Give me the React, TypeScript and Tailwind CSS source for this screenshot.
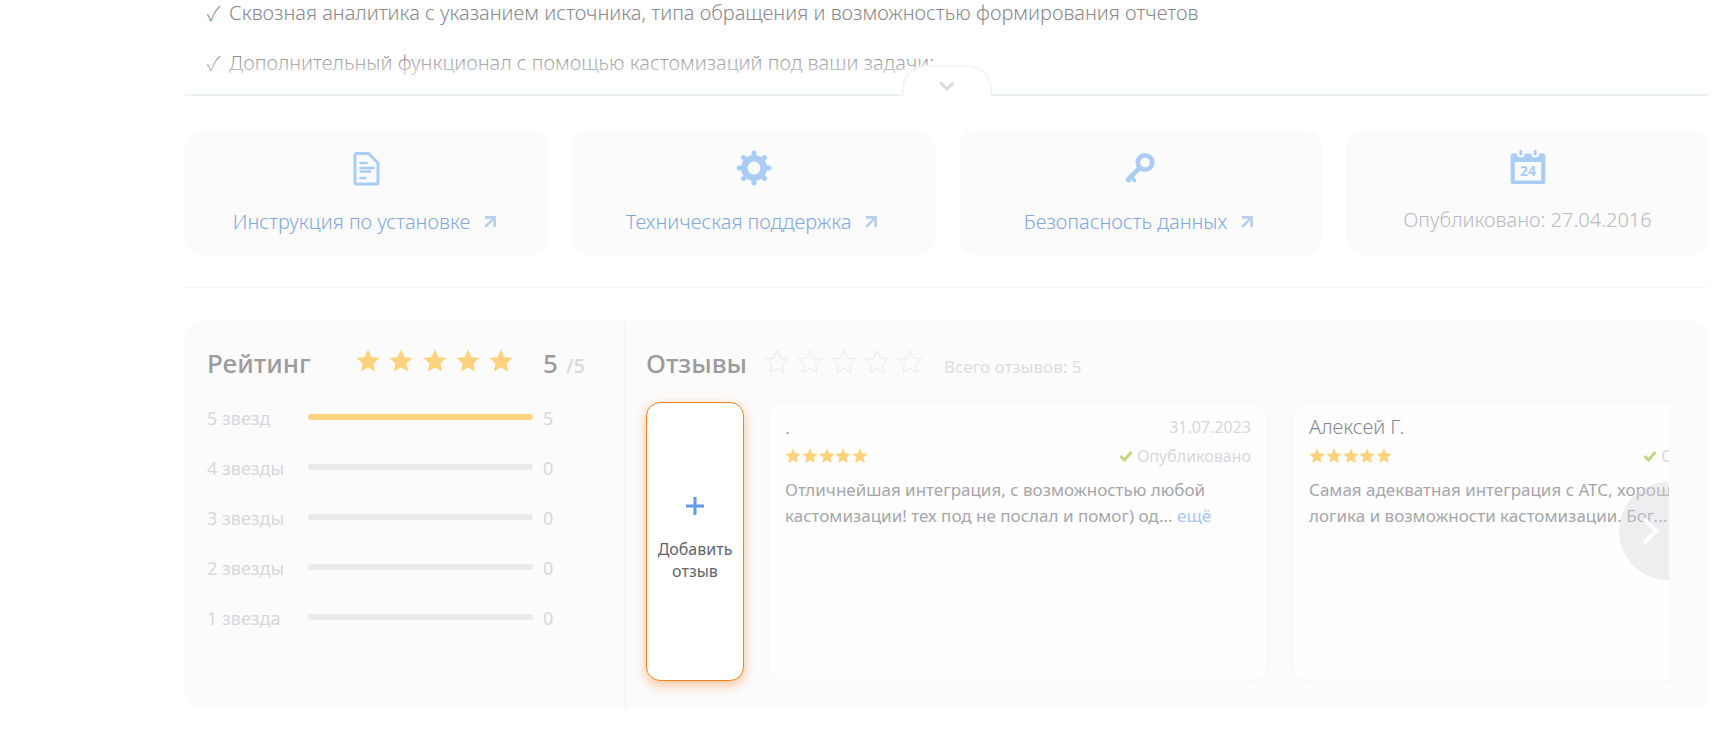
import type { ReactNode } from 'react';
import clsx from 'clsx';

const features = [
  'Сквозная аналитика с указанием источника, типа обращения и возможностью формирования отчетов',
  'Дополнительный функционал с помощью кастомизаций под ваши задачи:',
];

const ratings = [
  { label: '5 звезд', count: 5 },
  { label: '4 звезды', count: 0 },
  { label: '3 звезды', count: 0 },
  { label: '2 звезды', count: 0 },
  { label: '1 звезда', count: 0 },
];

const reviews = [
  {
    name: '.',
    date: '31.07.2023',
    text: 'Отличнейшая интеграция, с возможностью любой кастомизации! тех под не послал и помог) од...',
    more: true,
  },
  {
    name: 'Алексей Г.',
    date: '',
    text: 'Самая адекватная интеграция с АТС, хорошая логика и возможности кастомизации. Бог...',
    more: false,
  },
];

const STAR = 'M12 .5l3.400 7.500 8.100.9-6 5.500 1.700 8.100-7.200-4.100-7.200 4.100 1.700-8.100-6-5.500 8.100-.9z';

function Stars({ className, size, outline }: { className?: string; size: string; outline?: boolean }) {
  return (
    <div className={clsx('flex justify-between', className)}>
      {[1, 2, 3, 4, 5].map((n) => (
        <svg
          key={n}
          viewBox="0 0 24 24"
          className={clsx(size, outline ? 'fill-none stroke-[#e9eaec]' : 'fill-[#ffd280]')}
          strokeLinejoin="round"
        >
          <path d={STAR} />
        </svg>
      ))}
    </div>
  );
}

function DocIcon() {
  return (
    <svg viewBox="0 0 36 36" className="size-9 fill-none stroke-[#a9cdf4]" strokeLinecap="round" strokeLinejoin="round">
      <path d="M7.500 3.500h12l9.500 9.500v19.500a1.500 1.500 0 0 1-1.500 1.500H7.500A1.500 1.500 0 0 1 6 32.500V5a1.500 1.500 0 0 1 1.500-1.500z" strokeWidth="3" />
      <path d="M11.500 13h6M11.500 18h13M11.500 21.500h9.500M11.500 28h5" strokeWidth="2.600" />
    </svg>
  );
}

function GearIcon() {
  return (
    <svg viewBox="-18 -18 36 36" className="size-9 fill-none stroke-[#a9cdf4]">
      <circle r="9.700" strokeWidth="6.600" />
      <path
        d="M0-11.500V-15M0 11.500V15M-11.500 0H-15M11.500 0H15M8.200-8.200l2.200-2.200M-8.200-8.200l-2.200-2.200M8.200 8.200l2.200 2.200M-8.200 8.200l-2.200 2.200"
        strokeWidth="5"
        strokeLinecap="round"
      />
    </svg>
  );
}

function KeyIcon() {
  return (
    <svg viewBox="0 0 36 36" className="size-9 fill-none stroke-[#a9cdf4]" strokeLinecap="round">
      <circle cx="22" cy="12.500" r="7.200" strokeWidth="4.800" />
      <path d="M16 18.500L5 29.500" strokeWidth="4.600" />
      <path d="M8.500 27.500l3 3M5 29.500l1.200 1.200" strokeWidth="3.600" />
    </svg>
  );
}

function CalendarIcon() {
  return (
    <svg viewBox="0 0 36 36" className="size-9">
      <path
        d="M2.500 3.500h4.400a3.900 3.900 0 0 0 7.800 0h6.600a3.900 3.900 0 0 0 7.800 0h4.400a1.800 1.800 0 0 1 1.800 1.800v27a1.800 1.800 0 0 1-1.800 1.800h-31a1.800 1.800 0 0 1-1.800-1.800v-27a1.800 1.800 0 0 1 1.800-1.800zM4.800 12v18.500h26.400V12z"
        fillRule="evenodd"
        fill="#a9cdf4"
      />
      <path d="M10.800 1.500v2.500M25.200 1.500v2.500" stroke="#a9cdf4" strokeWidth="3" strokeLinecap="round" />
      <text x="18" y="26" textAnchor="middle" className="fill-[#a9cdf4] text-[14px] font-bold">
        24
      </text>
    </svg>
  );
}

function InfoCard({ icon, children }: { icon: ReactNode; children: ReactNode }) {
  return (
    <div className="flex h-[125px] flex-col items-center rounded-[16px] bg-[#fbfbfb] pt-5 text-[20px] leading-7 font-light">
      {icon}
      {children}
    </div>
  );
}

function InfoLink({ children }: { children: ReactNode }) {
  return (
    <a href="#" className="mt-[22px] flex items-center gap-[14px] pr-1 text-[#82a8db]">
      {children}
      <svg viewBox="0 0 12 12" className="size-3 fill-none stroke-[#b5cfee]" strokeWidth="2.600">
        <path d="M1 1.400h9.600V11M10.200 1.800L1.200 10.800" />
      </svg>
    </a>
  );
}

function ReviewCard({ name, date, text, more }: { name: string; date: string; text: string; more: boolean }) {
  return (
    <article className="w-[500px] shrink-0 rounded-[16px] border border-[#f7f7f7] bg-[#fefefe] px-4 pt-[10px]">
      <div className="flex items-center justify-between">
        <h3 className="text-[20px] leading-7 font-light text-[#88888c]">{name}</h3>
        {date && <time className="text-[16px] leading-7 text-[#d6d8dc]">{date}</time>}
      </div>
      <div className="mt-px flex items-center justify-between">
        <Stars size="size-4" className="w-[83px]" />
        <span className="flex items-center gap-1 text-[16px] leading-7 text-[#d6d8dc]">
          <svg viewBox="0 0 14 12" className="h-3 w-[14px] fill-none stroke-[#bfd97f]" strokeWidth="3">
            <path d="M1.500 6l4 4 7-8" />
          </svg>
          Опубликовано
        </span>
      </div>
      <p className="mt-[7px] pr-8 text-[17px] leading-[26px] text-[#a6a6a9]">
        {text}{' '}
        {more && (
          <a href="#" className="text-[#a9c8f2]">
            ещё
          </a>
        )}
      </p>
    </article>
  );
}

export default function App() {
  return (
    <main className="pr-[21px] pb-6 pl-[185px] font-['Noto_Sans',sans-serif]">
      <section className="relative border-b-2 border-[#eaf1f7] pb-[18px]">
        <ul className="flex flex-col gap-6 pl-[22px] text-[20px] leading-[26px] font-light text-[#88888c]">
          {features.map((feature) => (
            <li key={feature} className="flex gap-2">
              <span className="w-[14px] font-['Noto_Sans_CJK_SC',sans-serif]">✓</span>
              {feature}
            </li>
          ))}
        </ul>
        <div className="absolute inset-x-0 bottom-0 h-10 bg-linear-to-t from-white from-10% to-white/0" />
        <button
          aria-label="Развернуть описание"
          className="absolute -bottom-[2px] left-1/2 flex h-[31px] w-[90px] -translate-x-1/2 items-center justify-center rounded-t-[24px] border-2 border-b-0 border-[#f3f4f6] bg-white pt-2"
        >
          <svg viewBox="0 0 16 10" className="h-[10px] w-4 fill-none stroke-[#d9dadd]" strokeWidth="3">
            <path d="M1.500 1.500L8 8l6.500-6.500" />
          </svg>
        </button>
      </section>

      <section className="mt-[34px] grid grid-cols-4 gap-6 border-b border-[#f7f7f7] pb-8">
        <InfoCard icon={<DocIcon />}>
          <InfoLink>Инструкция по установке</InfoLink>
        </InfoCard>
        <InfoCard icon={<GearIcon />}>
          <InfoLink>Техническая поддержка</InfoLink>
        </InfoCard>
        <InfoCard icon={<KeyIcon />}>
          <InfoLink>Безопасность данных</InfoLink>
        </InfoCard>
        <InfoCard icon={<CalendarIcon />}>
          <p className="mt-5 text-[#b7bac1]">Опубликовано: 27.04.2016</p>
        </InfoCard>
      </section>

      <div className="mt-[33px] flex rounded-[16px] bg-[#fbfbfb]">
        <section className="w-[441px] shrink-0 border-r-2 border-[#f5f6f7] pt-6 pl-[22px]">
          <div className="flex items-center">
            <h2 className="w-[149px] text-[26px] leading-9 font-medium text-[#9c9c9f]">Рейтинг</h2>
            <Stars size="size-6" className="mb-1 w-[157px]" />
            <p className="ml-[30px] flex items-baseline gap-2 text-[26px] leading-9 font-medium text-[#9c9c9f]">
              5 <span className="text-[20px] leading-none text-[#d6d8dc]">/5</span>
            </p>
          </div>
          <ul className="mt-[23px] flex flex-col gap-[22px] text-[18px] leading-7 text-[#d6d8dc]">
            {ratings.map(({ label, count }) => (
              <li key={label} className="flex items-center">
                <span className="w-[101px]">{label}</span>
                <span className="mb-[2px] h-[6px] w-[225px] overflow-hidden rounded-full bg-[#e9eaeb]">
                  <span className="block h-full bg-[#ffd280]" style={{ width: `${(count / 5) * 100}%` }} />
                </span>
                <span className="ml-[10px]">{count}</span>
              </li>
            ))}
          </ul>
        </section>

        <section className="min-w-0 flex-1 pt-6 pr-10 pb-7 pl-5">
          <div className="flex items-center">
            <h2 className="text-[26px] leading-9 font-medium text-[#9c9c9f]">Отзывы</h2>
            <Stars size="size-6" outline className="mb-[2px] ml-[18px] w-[157px]" />
            <p className="mt-2 ml-[22px] text-[17px] leading-7 text-[#dcdee1]">Всего отзывов: 5</p>
          </div>
          <div className="mt-[21px] flex h-[279px] gap-6">
            <button className="flex w-[98px] shrink-0 flex-col items-center justify-center gap-[23px] rounded-[14px] border border-[#f58220] bg-white pb-[5px] text-[16px] leading-[22px] text-[#5f666e] shadow-[0_4px_12px_rgba(245,130,32,0.45)]">
              <svg viewBox="0 0 18 18" className="size-[18px] stroke-[#5c9ce6]" strokeWidth="3">
                <path d="M9 0v18M0 9h18" />
              </svg>
              Добавить отзыв
            </button>
            <div className="relative flex min-w-0 flex-1 gap-6 overflow-hidden">
              {reviews.map((review) => (
                <ReviewCard key={review.name} {...review} />
              ))}
              <button
                aria-label="Следующие отзывы"
                className="absolute top-20 -right-12 flex size-[98px] items-center rounded-full bg-[#d5d8dc]/40 pl-[22px]"
              >
                <svg viewBox="0 0 18 28" className="h-7 w-[18px] fill-none stroke-white" strokeWidth="4">
                  <path d="M3 2l12 12L3 26" />
                </svg>
              </button>
            </div>
          </div>
        </section>
      </div>
    </main>
  );
}
